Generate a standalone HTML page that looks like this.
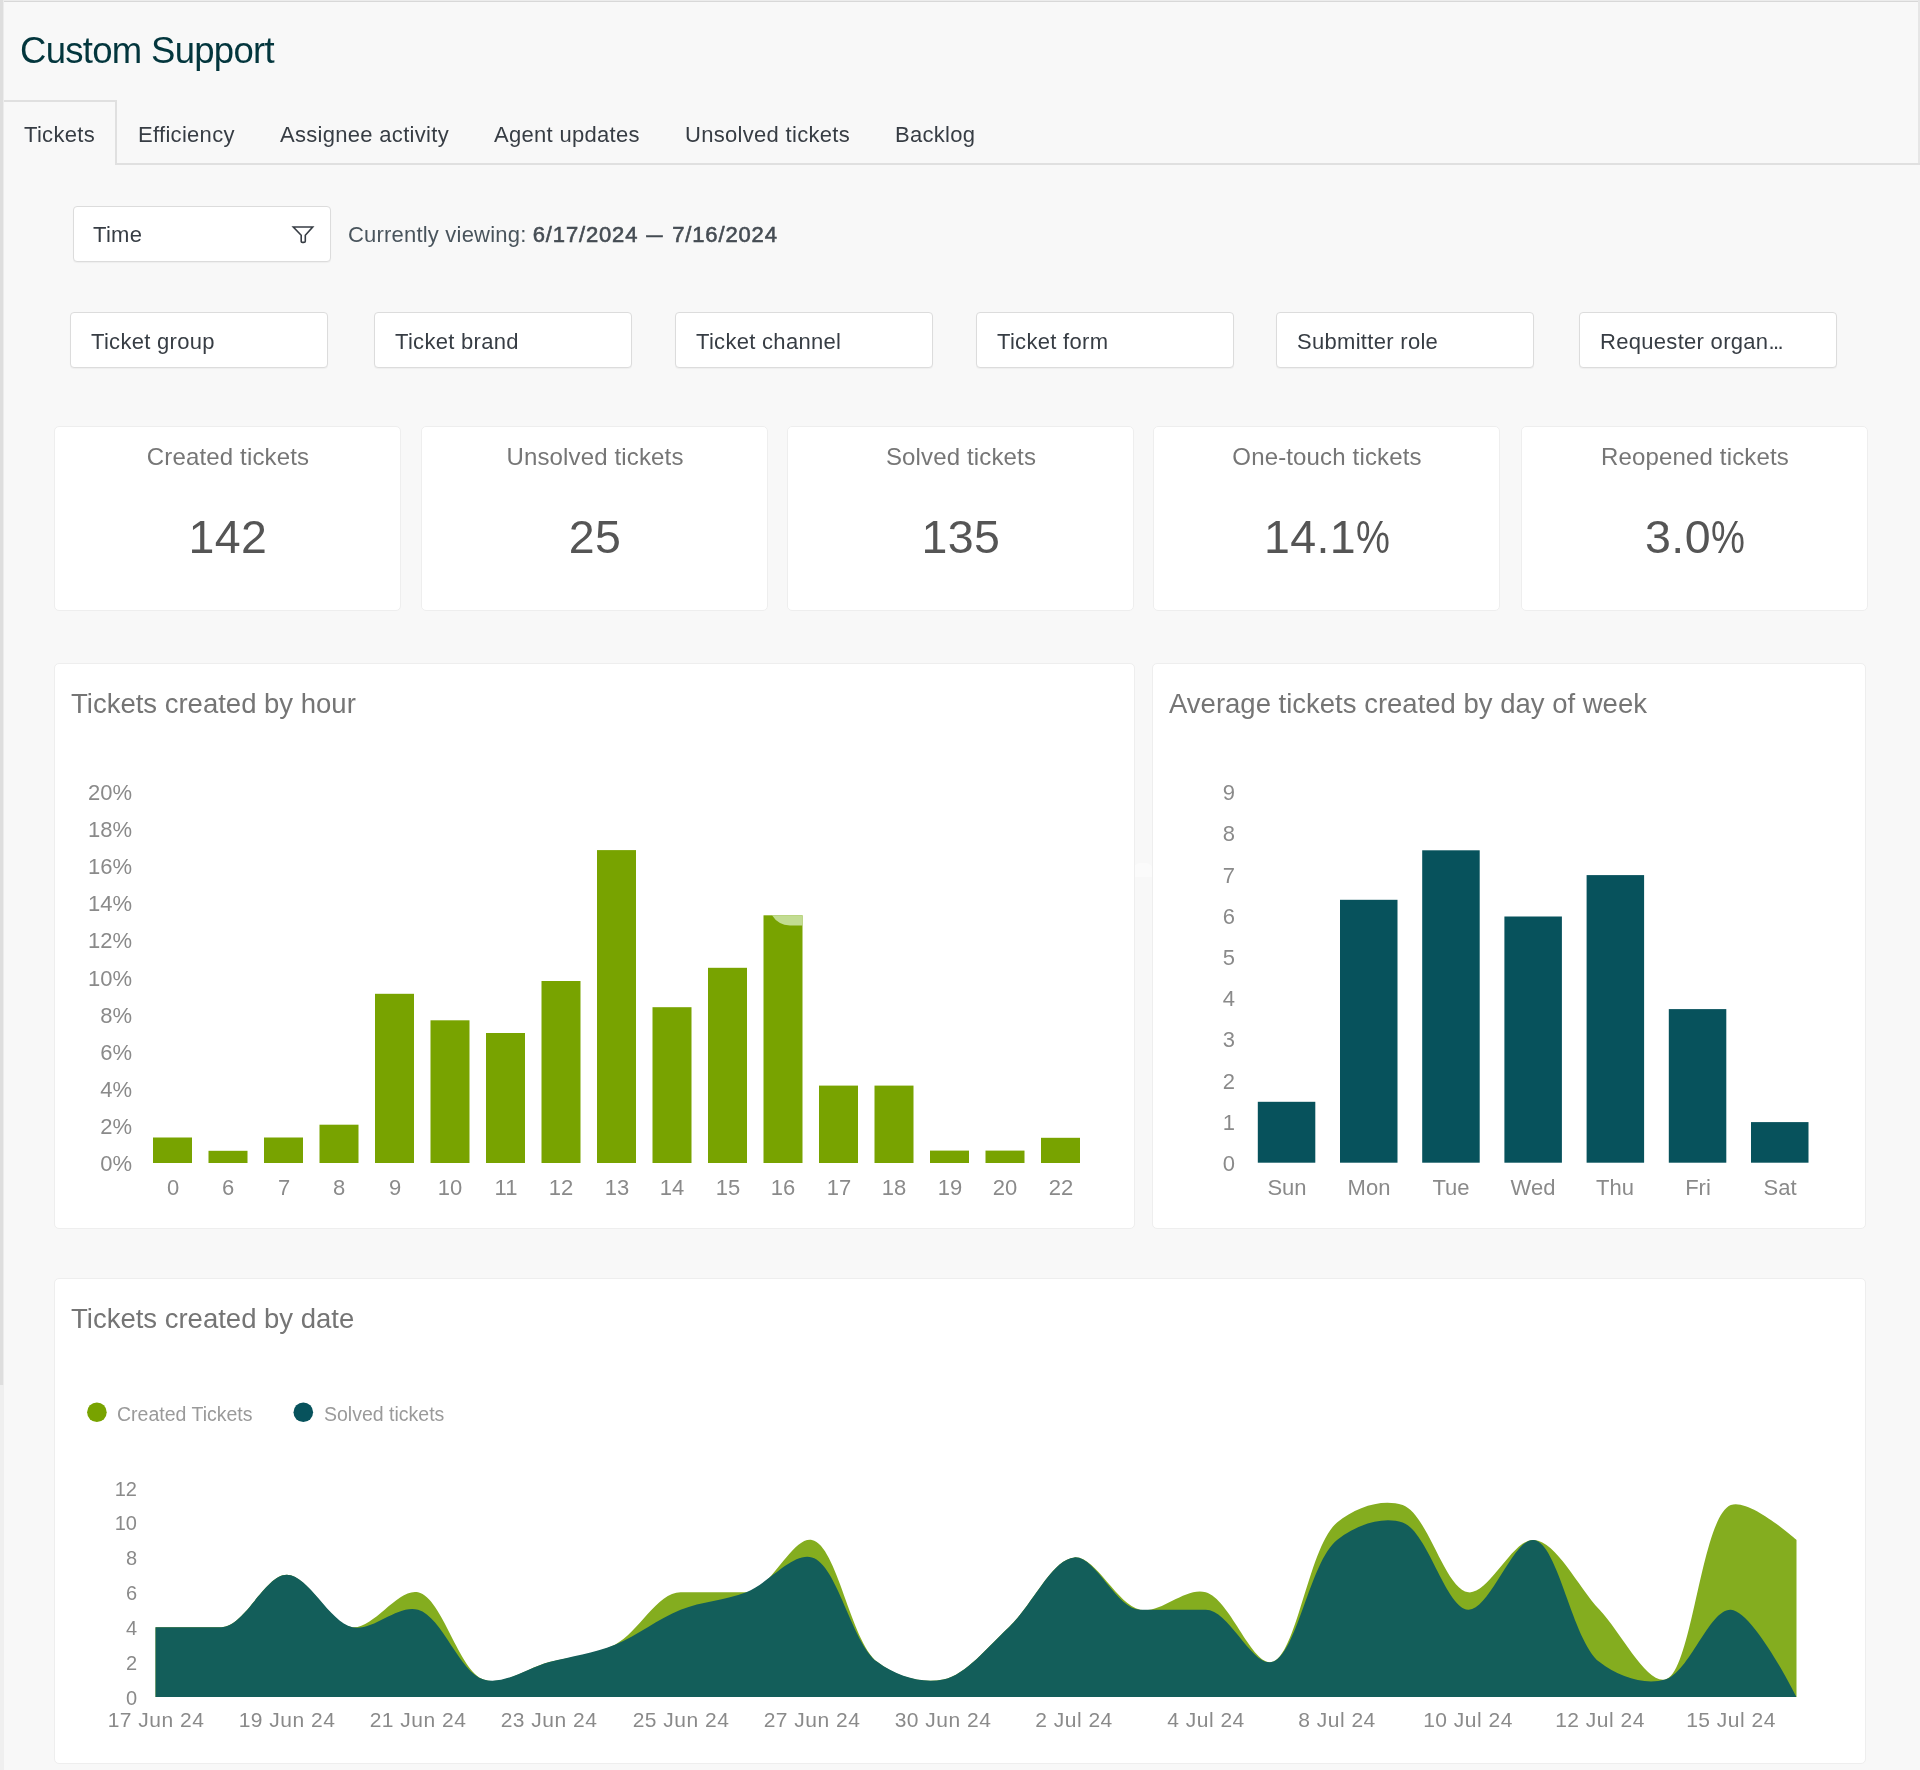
<!DOCTYPE html>
<html><head><meta charset="utf-8"><style>
html,body{margin:0;padding:0;}
body{width:1920px;height:1770px;overflow:hidden;background:#f8f8f8;position:relative;font-family:"Liberation Sans", sans-serif;}
.t{position:absolute;white-space:nowrap;line-height:normal;will-change:transform;-webkit-font-smoothing:antialiased;}
.box{position:absolute;background:#fff;border:1px solid #dcdcdc;border-radius:4px;box-shadow:0 1px 1px rgba(0,0,0,0.04);}
.pct{display:inline-block;width:34px;} .pct span{display:inline-block;transform:scaleX(0.82);transform-origin:0 50%;}
.card{position:absolute;background:#fff;border:1px solid #eeeeee;border-radius:5px;}
</style></head><body>
<div style="position:absolute;left:0;top:0;width:1920px;height:1px;background:#ececec"></div>
<div style="position:absolute;left:0;top:1px;width:1920px;height:1px;background:#d8d8d8"></div>
<div style="position:absolute;left:0;top:0;width:3px;height:1385px;background:#dedede"></div>
<div style="position:absolute;left:3px;top:0;width:1px;height:1385px;background:#ececec"></div>
<div style="position:absolute;left:0;top:1385px;width:4px;height:385px;background:#efefef"></div>
<div style="position:absolute;left:1918px;top:0;width:2px;height:164px;background:#e6e6e6"></div>
<div class="t" style="left:20px;top:30.47px;font-size:36.5px;color:#03363d;font-weight:400;letter-spacing:-0.7px;">Custom Support</div>
<div style="position:absolute;left:116px;top:163px;width:1804px;height:2px;background:#e0e0e0"></div>
<div style="position:absolute;left:4px;top:100px;width:111px;height:63px;border-top:2px solid #e0e0e0;border-right:2px solid #e0e0e0;background:#f8f8f8"></div>
<div class="t" style="left:24px;top:122.09px;font-size:22px;color:#373d44;font-weight:400;letter-spacing:0.3px;">Tickets</div>
<div class="t" style="left:138px;top:122.09px;font-size:22px;color:#373d44;font-weight:400;letter-spacing:0.3px;">Efficiency</div>
<div class="t" style="left:279.5px;top:122.09px;font-size:22px;color:#373d44;font-weight:400;letter-spacing:0.3px;">Assignee activity</div>
<div class="t" style="left:494px;top:122.09px;font-size:22px;color:#373d44;font-weight:400;letter-spacing:0.3px;">Agent updates</div>
<div class="t" style="left:685px;top:122.09px;font-size:22px;color:#373d44;font-weight:400;letter-spacing:0.3px;">Unsolved tickets</div>
<div class="t" style="left:894.5px;top:122.09px;font-size:22px;color:#373d44;font-weight:400;letter-spacing:0.3px;">Backlog</div>
<div class="box" style="left:73px;top:206px;width:256px;height:54px;"></div>
<div class="t" style="left:93px;top:222.09px;font-size:22px;color:#373d44;font-weight:400;letter-spacing:0.3px;">Time</div>
<svg style="position:absolute;left:291px;top:224px" width="24" height="20" viewBox="0 0 24 20"><path d="M2.3 3 H21.7 L14.3 11.2 V17.2 Q14.3 18.4 12.6 18.4 H11.4 Q10.2 18.4 10.2 17.4 V11.2 Z" fill="none" stroke="#373d44" stroke-width="1.6" stroke-linejoin="miter"/></svg>
<div class="t" style="left:348px;top:222.09px;font-size:22px;color:#49545c;letter-spacing:0.2px">Currently viewing: <span style="color:#454c53;letter-spacing:0.85px;-webkit-text-stroke:0.6px #454c53">6/17/2024 <span style="display:inline-block;width:20px;text-align:center;transform:scaleX(1.3)">–</span> 7/16/2024</span></div>
<div class="box" style="left:70px;top:312px;width:256px;height:54px;"></div>
<div class="t" style="left:91px;top:329.09px;font-size:22px;color:#373d44;font-weight:400;letter-spacing:0.3px;">Ticket group</div>
<div class="box" style="left:374px;top:312px;width:256px;height:54px;"></div>
<div class="t" style="left:395px;top:329.09px;font-size:22px;color:#373d44;font-weight:400;letter-spacing:0.3px;">Ticket brand</div>
<div class="box" style="left:675px;top:312px;width:256px;height:54px;"></div>
<div class="t" style="left:696px;top:329.09px;font-size:22px;color:#373d44;font-weight:400;letter-spacing:0.3px;">Ticket channel</div>
<div class="box" style="left:976px;top:312px;width:256px;height:54px;"></div>
<div class="t" style="left:997px;top:329.09px;font-size:22px;color:#373d44;font-weight:400;letter-spacing:0.3px;">Ticket form</div>
<div class="box" style="left:1276px;top:312px;width:256px;height:54px;"></div>
<div class="t" style="left:1297px;top:329.09px;font-size:22px;color:#373d44;font-weight:400;letter-spacing:0.3px;">Submitter role</div>
<div class="box" style="left:1579px;top:312px;width:256px;height:54px;"></div>
<div class="t" style="left:1600px;top:329.09px;font-size:22px;color:#373d44;font-weight:400;letter-spacing:0.3px;">Requester organ<span style="letter-spacing:-1.6px">...</span></div>
<div class="card" style="left:54px;top:426px;width:345px;height:183px;"></div>
<div class="t" style="left:-72.5px;width:600px;text-align:center;top:443.28px;font-size:24px;color:#767676;font-weight:400;letter-spacing:0.15px;">Created tickets</div>
<div class="t" style="left:-72.5px;width:600px;text-align:center;top:510.42px;font-size:46.5px;color:#555555;font-weight:400;letter-spacing:0.4px;">142</div>
<div class="card" style="left:421px;top:426px;width:345px;height:183px;"></div>
<div class="t" style="left:294.5px;width:600px;text-align:center;top:443.28px;font-size:24px;color:#767676;font-weight:400;letter-spacing:0.15px;">Unsolved tickets</div>
<div class="t" style="left:294.5px;width:600px;text-align:center;top:510.42px;font-size:46.5px;color:#555555;font-weight:400;letter-spacing:0.4px;">25</div>
<div class="card" style="left:787px;top:426px;width:345px;height:183px;"></div>
<div class="t" style="left:660.5px;width:600px;text-align:center;top:443.28px;font-size:24px;color:#767676;font-weight:400;letter-spacing:0.15px;">Solved tickets</div>
<div class="t" style="left:660.5px;width:600px;text-align:center;top:510.42px;font-size:46.5px;color:#555555;font-weight:400;letter-spacing:0.4px;">135</div>
<div class="card" style="left:1153px;top:426px;width:345px;height:183px;"></div>
<div class="t" style="left:1026.5px;width:600px;text-align:center;top:443.28px;font-size:24px;color:#767676;font-weight:400;letter-spacing:0.15px;">One-touch tickets</div>
<div class="t" style="left:1026.5px;width:600px;text-align:center;top:510.42px;font-size:46.5px;color:#555555;font-weight:400;letter-spacing:0.4px;">14.1<span class="pct"><span>%</span></span></div>
<div class="card" style="left:1521px;top:426px;width:345px;height:183px;"></div>
<div class="t" style="left:1394.5px;width:600px;text-align:center;top:443.28px;font-size:24px;color:#767676;font-weight:400;letter-spacing:0.15px;">Reopened tickets</div>
<div class="t" style="left:1394.5px;width:600px;text-align:center;top:510.42px;font-size:46.5px;color:#555555;font-weight:400;letter-spacing:0.4px;">3.0<span class="pct"><span>%</span></span></div>
<div style="position:absolute;left:1134px;top:863px;width:18px;height:14px;background:#fbfbfb;border-radius:6px 6px 0 0"></div>
<div class="card" style="left:54px;top:663px;width:1079px;height:564px;"></div>
<div class="card" style="left:1152px;top:663px;width:712px;height:564px;"></div>
<div class="card" style="left:54px;top:1278px;width:1810px;height:484px;"></div>
<div class="t" style="left:71px;top:687.61px;font-size:27.5px;color:#757575;font-weight:400;letter-spacing:0px;">Tickets created by hour</div>
<div class="t" style="left:1169px;top:688.11px;font-size:27.5px;color:#757575;font-weight:400;letter-spacing:0px;">Average tickets created by day of week</div>
<div class="t" style="left:71px;top:1303.11px;font-size:27.5px;color:#757575;font-weight:400;letter-spacing:0px;">Tickets created by date</div>
<svg style="position:absolute;left:0;top:0" width="1920" height="1770">
<rect x="153.0" y="1137.5" width="39" height="25.5" fill="#78a300"/>
<rect x="208.5" y="1150.8" width="39" height="12.2" fill="#78a300"/>
<rect x="264.0" y="1137.5" width="39" height="25.5" fill="#78a300"/>
<rect x="319.5" y="1124.7" width="39" height="38.3" fill="#78a300"/>
<rect x="375.0" y="993.8" width="39" height="169.2" fill="#78a300"/>
<rect x="430.5" y="1020.3" width="39" height="142.7" fill="#78a300"/>
<rect x="486.0" y="1033.0" width="39" height="130.0" fill="#78a300"/>
<rect x="541.5" y="981.0" width="39" height="182.0" fill="#78a300"/>
<rect x="597.0" y="850.1" width="39" height="312.9" fill="#78a300"/>
<rect x="652.5" y="1007.2" width="39" height="155.8" fill="#78a300"/>
<rect x="708.0" y="967.8" width="39" height="195.2" fill="#78a300"/>
<rect x="763.5" y="915.3" width="39" height="247.7" fill="#78a300"/>
<rect x="819.0" y="1085.6" width="39" height="77.4" fill="#78a300"/>
<rect x="874.5" y="1085.6" width="39" height="77.4" fill="#78a300"/>
<rect x="930.0" y="1150.6" width="39" height="12.4" fill="#78a300"/>
<rect x="985.5" y="1150.6" width="39" height="12.4" fill="#78a300"/>
<rect x="1041.0" y="1137.8" width="39" height="25.2" fill="#78a300"/>
<path d="M772,915.3 H802.5 V925.5 H790 Q778,925 772,915.3 Z" fill="#c2dc92"/>
<rect x="1257.8" y="1101.8" width="57.5" height="60.9" fill="#07525c"/>
<rect x="1340.0" y="899.8" width="57.5" height="262.9" fill="#07525c"/>
<rect x="1422.2" y="850.3" width="57.5" height="312.4" fill="#07525c"/>
<rect x="1504.4" y="916.5" width="57.5" height="246.2" fill="#07525c"/>
<rect x="1586.6" y="875.1" width="57.5" height="287.6" fill="#07525c"/>
<rect x="1668.8" y="1009.1" width="57.5" height="153.6" fill="#07525c"/>
<rect x="1751.0" y="1122.1" width="57.5" height="40.6" fill="#07525c"/>
<path d="M155.50,1627.20 C155.50,1627.20 200.45,1627.20 221.14,1627.20 C244.54,1627.20 264.90,1574.85 286.78,1574.85 C308.66,1574.85 329.83,1625.11 352.42,1627.20 C373.67,1629.17 397.91,1587.82 418.06,1592.30 C442.48,1597.72 458.54,1670.85 483.70,1679.55 C503.54,1686.41 527.46,1667.92 549.34,1662.10 C571.22,1656.28 594.14,1655.14 614.98,1644.65 C638.15,1632.98 657.22,1592.30 680.62,1592.30 C701.31,1592.30 725.57,1592.30 746.26,1592.30 C769.66,1592.30 792.14,1535.90 811.90,1539.95 C837.29,1545.16 850.14,1640.45 877.54,1662.10 C896.72,1677.25 922.34,1683.92 943.18,1679.55 C966.35,1674.69 987.62,1646.74 1008.82,1627.20 C1031.47,1606.32 1051.81,1559.02 1074.46,1557.40 C1095.66,1555.88 1116.93,1604.89 1140.10,1609.75 C1160.94,1614.12 1185.44,1586.50 1205.74,1592.30 C1229.85,1599.18 1251.54,1665.25 1271.38,1662.10 C1296.55,1658.10 1308.47,1546.33 1337.02,1522.50 C1355.96,1506.69 1382.82,1498.19 1402.66,1505.05 C1427.82,1513.75 1444.78,1589.31 1468.30,1592.30 C1488.92,1594.92 1512.74,1538.43 1533.94,1539.95 C1556.59,1541.57 1577.70,1586.48 1599.58,1609.75 C1621.46,1633.02 1645.93,1683.41 1665.22,1679.55 C1692.13,1674.17 1701.15,1516.27 1730.86,1505.05 C1749.62,1497.96 1796.50,1539.95 1796.50,1539.95 L1796.50,1697 L155.50,1697 Z" fill="#84ad1f"/>
<path d="M155.50,1627.20 C155.50,1627.20 200.45,1627.20 221.14,1627.20 C244.54,1627.20 264.90,1574.85 286.78,1574.85 C308.66,1574.85 329.25,1622.34 352.42,1627.20 C373.26,1631.57 397.76,1603.95 418.06,1609.75 C442.17,1616.63 459.59,1672.67 483.70,1679.55 C504.00,1685.35 527.46,1667.92 549.34,1662.10 C571.22,1656.28 593.57,1653.06 614.98,1644.65 C637.38,1635.85 658.22,1618.55 680.62,1609.75 C702.03,1601.34 724.85,1600.71 746.26,1592.30 C768.66,1583.50 792.16,1552.13 811.90,1557.40 C837.34,1564.20 851.28,1642.74 877.54,1662.10 C897.01,1676.46 922.34,1683.92 943.18,1679.55 C966.35,1674.69 987.62,1646.74 1008.82,1627.20 C1031.47,1606.32 1051.81,1559.02 1074.46,1557.40 C1095.66,1555.88 1116.70,1609.75 1140.10,1609.75 C1160.79,1609.75 1185.05,1609.75 1205.74,1609.75 C1229.14,1609.75 1251.62,1666.15 1271.38,1662.10 C1296.77,1656.89 1309.62,1561.60 1337.02,1539.95 C1356.20,1524.80 1382.82,1515.64 1402.66,1522.50 C1427.82,1531.20 1445.66,1608.51 1468.30,1609.75 C1489.51,1610.91 1513.74,1537.29 1533.94,1539.95 C1558.25,1543.15 1572.18,1640.45 1599.58,1662.10 C1618.76,1677.25 1644.92,1685.35 1665.22,1679.55 C1689.33,1672.67 1709.65,1608.59 1730.86,1609.75 C1753.50,1610.99 1796.50,1697.00 1796.50,1697.00 L1796.50,1697 L155.50,1697 Z" fill="#135e5a"/>
<circle cx="96.9" cy="1412.3" r="9.8" fill="#78a300"/>
<circle cx="303.3" cy="1412.3" r="9.8" fill="#07525c"/>
</svg>
<div class="t" style="left:-468.5px;width:600px;text-align:right;top:1151.09px;font-size:22px;color:#8a8a8a;font-weight:400;letter-spacing:0px;">0%</div>
<div class="t" style="left:-468.5px;width:600px;text-align:right;top:1113.99px;font-size:22px;color:#8a8a8a;font-weight:400;letter-spacing:0px;">2%</div>
<div class="t" style="left:-468.5px;width:600px;text-align:right;top:1076.89px;font-size:22px;color:#8a8a8a;font-weight:400;letter-spacing:0px;">4%</div>
<div class="t" style="left:-468.5px;width:600px;text-align:right;top:1039.79px;font-size:22px;color:#8a8a8a;font-weight:400;letter-spacing:0px;">6%</div>
<div class="t" style="left:-468.5px;width:600px;text-align:right;top:1002.69px;font-size:22px;color:#8a8a8a;font-weight:400;letter-spacing:0px;">8%</div>
<div class="t" style="left:-468.5px;width:600px;text-align:right;top:965.59px;font-size:22px;color:#8a8a8a;font-weight:400;letter-spacing:0px;">10%</div>
<div class="t" style="left:-468.5px;width:600px;text-align:right;top:928.49px;font-size:22px;color:#8a8a8a;font-weight:400;letter-spacing:0px;">12%</div>
<div class="t" style="left:-468.5px;width:600px;text-align:right;top:891.39px;font-size:22px;color:#8a8a8a;font-weight:400;letter-spacing:0px;">14%</div>
<div class="t" style="left:-468.5px;width:600px;text-align:right;top:854.29px;font-size:22px;color:#8a8a8a;font-weight:400;letter-spacing:0px;">16%</div>
<div class="t" style="left:-468.5px;width:600px;text-align:right;top:817.19px;font-size:22px;color:#8a8a8a;font-weight:400;letter-spacing:0px;">18%</div>
<div class="t" style="left:-468.5px;width:600px;text-align:right;top:780.09px;font-size:22px;color:#8a8a8a;font-weight:400;letter-spacing:0px;">20%</div>
<div class="t" style="left:-127.5px;width:600px;text-align:center;top:1175.09px;font-size:22px;color:#8a8a8a;font-weight:400;letter-spacing:0px;">0</div>
<div class="t" style="left:-72.0px;width:600px;text-align:center;top:1175.09px;font-size:22px;color:#8a8a8a;font-weight:400;letter-spacing:0px;">6</div>
<div class="t" style="left:-16.5px;width:600px;text-align:center;top:1175.09px;font-size:22px;color:#8a8a8a;font-weight:400;letter-spacing:0px;">7</div>
<div class="t" style="left:39.0px;width:600px;text-align:center;top:1175.09px;font-size:22px;color:#8a8a8a;font-weight:400;letter-spacing:0px;">8</div>
<div class="t" style="left:94.5px;width:600px;text-align:center;top:1175.09px;font-size:22px;color:#8a8a8a;font-weight:400;letter-spacing:0px;">9</div>
<div class="t" style="left:150.0px;width:600px;text-align:center;top:1175.09px;font-size:22px;color:#8a8a8a;font-weight:400;letter-spacing:0px;">10</div>
<div class="t" style="left:205.5px;width:600px;text-align:center;top:1175.09px;font-size:22px;color:#8a8a8a;font-weight:400;letter-spacing:0px;">11</div>
<div class="t" style="left:261.0px;width:600px;text-align:center;top:1175.09px;font-size:22px;color:#8a8a8a;font-weight:400;letter-spacing:0px;">12</div>
<div class="t" style="left:316.5px;width:600px;text-align:center;top:1175.09px;font-size:22px;color:#8a8a8a;font-weight:400;letter-spacing:0px;">13</div>
<div class="t" style="left:372.0px;width:600px;text-align:center;top:1175.09px;font-size:22px;color:#8a8a8a;font-weight:400;letter-spacing:0px;">14</div>
<div class="t" style="left:427.5px;width:600px;text-align:center;top:1175.09px;font-size:22px;color:#8a8a8a;font-weight:400;letter-spacing:0px;">15</div>
<div class="t" style="left:483.0px;width:600px;text-align:center;top:1175.09px;font-size:22px;color:#8a8a8a;font-weight:400;letter-spacing:0px;">16</div>
<div class="t" style="left:538.5px;width:600px;text-align:center;top:1175.09px;font-size:22px;color:#8a8a8a;font-weight:400;letter-spacing:0px;">17</div>
<div class="t" style="left:594.0px;width:600px;text-align:center;top:1175.09px;font-size:22px;color:#8a8a8a;font-weight:400;letter-spacing:0px;">18</div>
<div class="t" style="left:649.5px;width:600px;text-align:center;top:1175.09px;font-size:22px;color:#8a8a8a;font-weight:400;letter-spacing:0px;">19</div>
<div class="t" style="left:705.0px;width:600px;text-align:center;top:1175.09px;font-size:22px;color:#8a8a8a;font-weight:400;letter-spacing:0px;">20</div>
<div class="t" style="left:760.5px;width:600px;text-align:center;top:1175.09px;font-size:22px;color:#8a8a8a;font-weight:400;letter-spacing:0px;">22</div>
<div class="t" style="left:634.5px;width:600px;text-align:right;top:1151.09px;font-size:22px;color:#8a8a8a;font-weight:400;letter-spacing:0px;">0</div>
<div class="t" style="left:634.5px;width:600px;text-align:right;top:1109.89px;font-size:22px;color:#8a8a8a;font-weight:400;letter-spacing:0px;">1</div>
<div class="t" style="left:634.5px;width:600px;text-align:right;top:1068.69px;font-size:22px;color:#8a8a8a;font-weight:400;letter-spacing:0px;">2</div>
<div class="t" style="left:634.5px;width:600px;text-align:right;top:1027.49px;font-size:22px;color:#8a8a8a;font-weight:400;letter-spacing:0px;">3</div>
<div class="t" style="left:634.5px;width:600px;text-align:right;top:986.29px;font-size:22px;color:#8a8a8a;font-weight:400;letter-spacing:0px;">4</div>
<div class="t" style="left:634.5px;width:600px;text-align:right;top:945.09px;font-size:22px;color:#8a8a8a;font-weight:400;letter-spacing:0px;">5</div>
<div class="t" style="left:634.5px;width:600px;text-align:right;top:903.89px;font-size:22px;color:#8a8a8a;font-weight:400;letter-spacing:0px;">6</div>
<div class="t" style="left:634.5px;width:600px;text-align:right;top:862.69px;font-size:22px;color:#8a8a8a;font-weight:400;letter-spacing:0px;">7</div>
<div class="t" style="left:634.5px;width:600px;text-align:right;top:821.49px;font-size:22px;color:#8a8a8a;font-weight:400;letter-spacing:0px;">8</div>
<div class="t" style="left:634.5px;width:600px;text-align:right;top:780.29px;font-size:22px;color:#8a8a8a;font-weight:400;letter-spacing:0px;">9</div>
<div class="t" style="left:986.55px;width:600px;text-align:center;top:1175.09px;font-size:22px;color:#8a8a8a;font-weight:400;letter-spacing:0px;">Sun</div>
<div class="t" style="left:1068.75px;width:600px;text-align:center;top:1175.09px;font-size:22px;color:#8a8a8a;font-weight:400;letter-spacing:0px;">Mon</div>
<div class="t" style="left:1150.95px;width:600px;text-align:center;top:1175.09px;font-size:22px;color:#8a8a8a;font-weight:400;letter-spacing:0px;">Tue</div>
<div class="t" style="left:1233.15px;width:600px;text-align:center;top:1175.09px;font-size:22px;color:#8a8a8a;font-weight:400;letter-spacing:0px;">Wed</div>
<div class="t" style="left:1315.35px;width:600px;text-align:center;top:1175.09px;font-size:22px;color:#8a8a8a;font-weight:400;letter-spacing:0px;">Thu</div>
<div class="t" style="left:1397.55px;width:600px;text-align:center;top:1175.09px;font-size:22px;color:#8a8a8a;font-weight:400;letter-spacing:0px;">Fri</div>
<div class="t" style="left:1479.75px;width:600px;text-align:center;top:1175.09px;font-size:22px;color:#8a8a8a;font-weight:400;letter-spacing:0px;">Sat</div>
<div class="t" style="left:-463.5px;width:600px;text-align:right;top:1686.90px;font-size:20px;color:#8a8a8a;font-weight:400;letter-spacing:0px;">0</div>
<div class="t" style="left:-463.5px;width:600px;text-align:right;top:1652.00px;font-size:20px;color:#8a8a8a;font-weight:400;letter-spacing:0px;">2</div>
<div class="t" style="left:-463.5px;width:600px;text-align:right;top:1617.10px;font-size:20px;color:#8a8a8a;font-weight:400;letter-spacing:0px;">4</div>
<div class="t" style="left:-463.5px;width:600px;text-align:right;top:1582.20px;font-size:20px;color:#8a8a8a;font-weight:400;letter-spacing:0px;">6</div>
<div class="t" style="left:-463.5px;width:600px;text-align:right;top:1547.30px;font-size:20px;color:#8a8a8a;font-weight:400;letter-spacing:0px;">8</div>
<div class="t" style="left:-463.5px;width:600px;text-align:right;top:1512.40px;font-size:20px;color:#8a8a8a;font-weight:400;letter-spacing:0px;">10</div>
<div class="t" style="left:-463.5px;width:600px;text-align:right;top:1477.50px;font-size:20px;color:#8a8a8a;font-weight:400;letter-spacing:0px;">12</div>
<div class="t" style="left:-144.5px;width:600px;text-align:center;top:1708.49px;font-size:21px;color:#8a8a8a;font-weight:400;letter-spacing:0.5px;">17 Jun 24</div>
<div class="t" style="left:-13.220000000000027px;width:600px;text-align:center;top:1708.49px;font-size:21px;color:#8a8a8a;font-weight:400;letter-spacing:0.5px;">19 Jun 24</div>
<div class="t" style="left:118.06px;width:600px;text-align:center;top:1708.49px;font-size:21px;color:#8a8a8a;font-weight:400;letter-spacing:0.5px;">21 Jun 24</div>
<div class="t" style="left:249.34000000000003px;width:600px;text-align:center;top:1708.49px;font-size:21px;color:#8a8a8a;font-weight:400;letter-spacing:0.5px;">23 Jun 24</div>
<div class="t" style="left:380.62px;width:600px;text-align:center;top:1708.49px;font-size:21px;color:#8a8a8a;font-weight:400;letter-spacing:0.5px;">25 Jun 24</div>
<div class="t" style="left:511.9px;width:600px;text-align:center;top:1708.49px;font-size:21px;color:#8a8a8a;font-weight:400;letter-spacing:0.5px;">27 Jun 24</div>
<div class="t" style="left:643.1800000000001px;width:600px;text-align:center;top:1708.49px;font-size:21px;color:#8a8a8a;font-weight:400;letter-spacing:0.5px;">30 Jun 24</div>
<div class="t" style="left:774.46px;width:600px;text-align:center;top:1708.49px;font-size:21px;color:#8a8a8a;font-weight:400;letter-spacing:0.5px;">2 Jul 24</div>
<div class="t" style="left:905.74px;width:600px;text-align:center;top:1708.49px;font-size:21px;color:#8a8a8a;font-weight:400;letter-spacing:0.5px;">4 Jul 24</div>
<div class="t" style="left:1037.02px;width:600px;text-align:center;top:1708.49px;font-size:21px;color:#8a8a8a;font-weight:400;letter-spacing:0.5px;">8 Jul 24</div>
<div class="t" style="left:1168.3px;width:600px;text-align:center;top:1708.49px;font-size:21px;color:#8a8a8a;font-weight:400;letter-spacing:0.5px;">10 Jul 24</div>
<div class="t" style="left:1299.58px;width:600px;text-align:center;top:1708.49px;font-size:21px;color:#8a8a8a;font-weight:400;letter-spacing:0.5px;">12 Jul 24</div>
<div class="t" style="left:1430.8600000000001px;width:600px;text-align:center;top:1708.49px;font-size:21px;color:#8a8a8a;font-weight:400;letter-spacing:0.5px;">15 Jul 24</div>
<div class="t" style="left:117px;top:1402.95px;font-size:19.5px;color:#9a9a9a;font-weight:400;letter-spacing:0px;">Created Tickets</div>
<div class="t" style="left:323.5px;top:1402.95px;font-size:19.5px;color:#9a9a9a;font-weight:400;letter-spacing:0px;">Solved tickets</div>
</body></html>
